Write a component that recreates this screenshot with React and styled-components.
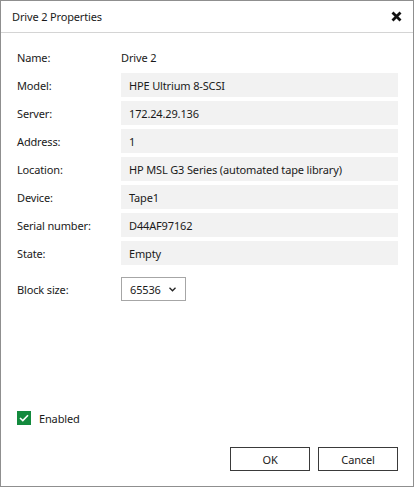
import React from "react";
import styled, { createGlobalStyle } from "styled-components";

const Global = createGlobalStyle`
  html, body { margin: 0; padding: 0; background: #fff; }
  body {
    font-family: "Noto Sans", "Open Sans", sans-serif;
    font-size: 11px;
    letter-spacing: -0.15px;
    color: #1a1a1a;
  }
  * { box-sizing: border-box; }
`;

const Window = styled.div`
  width: 414px;
  height: 487px;
  border: 1px solid #8f8f8f;
  background: #fff;
  display: flex;
  flex-direction: column;
`;

const TitleBar = styled.div`
  height: 32px;
  flex: none;
  display: flex;
  align-items: center;
  justify-content: space-between;
  padding: 0 11px 0 11px;
  border-bottom: 1px solid #d4d4d4;
`;

const CloseButton = styled.button`
  border: 0;
  background: none;
  padding: 0;
  width: 12px;
  height: 12px;
  display: flex;
  align-items: center;
  justify-content: center;
  cursor: pointer;
`;

const Body = styled.div`
  flex: 1;
  display: flex;
  flex-direction: column;
  padding: 12px 15px 15px 16px;
`;

const Grid = styled.div`
  display: grid;
  grid-template-columns: 104px 1fr;
  row-gap: 4px;
`;

const Label = styled.div`
  height: 24px;
  display: flex;
  align-items: center;
  margin-top: ${(p) => (p.$gap ? "8px" : "0")};
  white-space: nowrap;
`;

const Value = styled.div`
  height: 24px;
  display: flex;
  align-items: center;
  padding-left: ${(p) => (p.$plain ? "0" : "8px")};
  background: ${(p) => (p.$plain ? "transparent" : "#f2f2f2")};
  white-space: nowrap;
`;

const Select = styled.div`
  margin-top: 8px;
  width: 65px;
  height: 24px;
  border: 1px solid #a6a6a6;
  display: flex;
  align-items: center;
  justify-content: space-between;
  padding: 0 9px 0 8px;
`;

const Spacer = styled.div`
  flex: 1;
`;

const CheckRow = styled.label`
  display: flex;
  align-items: center;
  gap: 8px;
  height: 14px;
`;

const CheckBox = styled.span`
  width: 14px;
  height: 14px;
  background: #138a3d;
  display: flex;
  align-items: center;
  justify-content: center;
`;

const Buttons = styled.div`
  margin-top: 22px;
  display: flex;
  justify-content: flex-end;
  gap: 8px;
`;

const Button = styled.button`
  width: 80px;
  height: 24px;
  border: 1px solid #3a3a3a;
  background: #fff;
  font-family: inherit;
  font-size: 11px;
  letter-spacing: inherit;
  color: #1a1a1a;
  padding: 0;
`;

const rows = [
  ["Model:", "HPE Ultrium 8-SCSI"],
  ["Server:", "172.24.29.136"],
  ["Address:", "1"],
  ["Location:", "HP MSL G3 Series (automated tape library)"],
  ["Device:", "Tape1"],
  ["Serial number:", "D44AF97162"],
  ["State:", "Empty"],
];

export default function App() {
  return (
    <>
      <Global />
      <Window>
        <TitleBar>
          <span>Drive 2 Properties</span>
          <CloseButton aria-label="Close">
            <svg width="11" height="11" viewBox="0 0 11 11">
              <path d="M1.5 1.5 L9.5 9.5 M9.5 1.5 L1.5 9.5" stroke="#111" strokeWidth="2.8" strokeLinecap="butt" />
            </svg>
          </CloseButton>
        </TitleBar>
        <Body>
          <Grid>
            <Label>Name:</Label>
            <Value $plain>Drive 2</Value>
            {rows.map(([k, v]) => (
              <React.Fragment key={k}>
                <Label>{k}</Label>
                <Value>{v}</Value>
              </React.Fragment>
            ))}
            <Label $gap>Block size:</Label>
            <div>
              <Select>
                <span>65536</span>
                <svg width="7" height="5" viewBox="0 0 7 5">
                  <path d="M0.5 0.8 L3.5 3.8 L6.5 0.8" fill="none" stroke="#222" strokeWidth="1.3" />
                </svg>
              </Select>
            </div>
          </Grid>
          <Spacer />
          <CheckRow>
            <CheckBox>
              <svg width="10" height="8" viewBox="0 0 10 8">
                <path d="M1 4 L3.8 6.6 L9 1.2" fill="none" stroke="#fff" strokeWidth="1.6" />
              </svg>
            </CheckBox>
            <span>Enabled</span>
          </CheckRow>
          <Buttons>
            <Button>OK</Button>
            <Button>Cancel</Button>
          </Buttons>
        </Body>
      </Window>
    </>
  );
}
